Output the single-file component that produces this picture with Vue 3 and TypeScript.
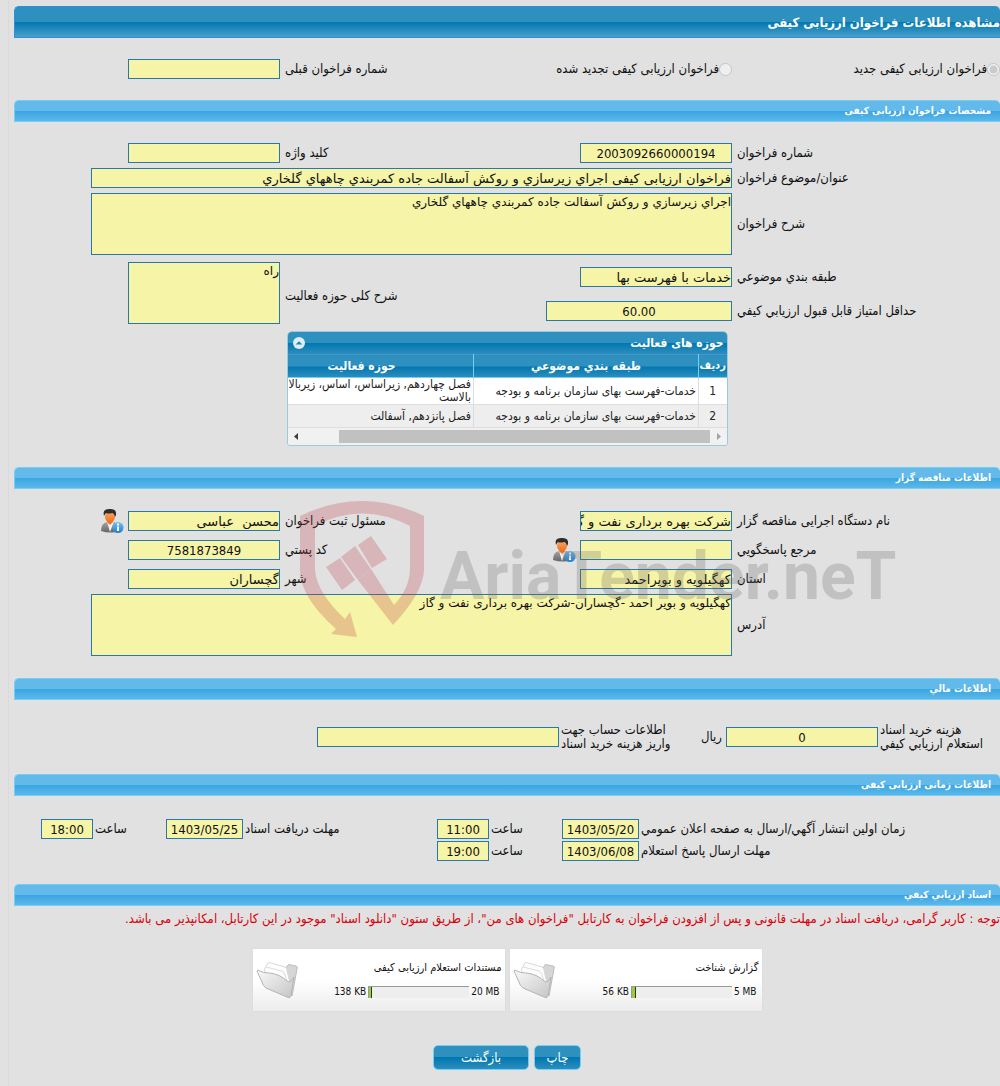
<script setup lang="ts">
import { ref } from 'vue'

interface ActivityRow {
  id: number
  category: string
  field: string[]
}

interface DocumentCard {
  title: string
  limit: string
  used: string
  percent: number
}

const kind = ref<'new' | 'renewed'>('new')

const description = ref('اجراي زيرسازي و روکش آسفالت جاده کمربندي چاههاي گلخاري')
const scope = ref('راه')
const address = ref('کهگیلویه و بویر احمد -گچساران-شرکت بهره برداری نفت و گاز')

const activities: ActivityRow[] = [
  {
    id: 1,
    category: 'خدمات-فهرست بهای سازمان برنامه و بودجه',
    field: ['فصل چهاردهم, زیراساس، اساس، زیربالا', 'بالاست'],
  },
  {
    id: 2,
    category: 'خدمات-فهرست بهای سازمان برنامه و بودجه',
    field: ['فصل پانزدهم, آسفالت'],
  },
]

const documents: DocumentCard[] = [
  { title: 'گزارش شناخت', limit: '5 MB', used: '56 KB', percent: 4 },
  { title: 'مستندات استعلام ارزیابی کیفی', limit: '20 MB', used: '138 KB', percent: 3 },
]
</script>

<template>
  <main class="page" dir="rtl">
    <h1 class="title">مشاهده اطلاعات فراخوان ارزیابی کیفی</h1>

    <section class="grid kind">
      <label class="radio"><input v-model="kind" type="radio" value="new" disabled />فراخوان ارزیابی کیفی جدید</label>
      <label class="radio"><input v-model="kind" type="radio" value="renewed" disabled />فراخوان ارزیابی کیفی تجدید شده</label>
      <label class="lbl" for="prev">شماره فراخوان قبلی</label>
      <input id="prev" class="box std" readonly />
    </section>

    <h2 class="bar">مشخصات فراخوان ارزیابی کیفی</h2>
    <section class="specs">
      <div class="grid">
        <label class="lbl" for="num">شماره فراخوان</label>
        <input id="num" class="box std num" readonly value="2003092660000194" />
        <label class="lbl" for="key">کلید واژه</label>
        <input id="key" class="box std" readonly />
        <label class="lbl c1" for="subject">عنوان/موضوع فراخوان</label>
        <input id="subject" class="box wide" readonly value="فراخوان ارزیابی کیفی اجراي زيرسازي و روکش آسفالت جاده کمربندي چاههاي گلخاري" />
        <label class="lbl c1" for="desc">شرح فراخوان</label>
        <textarea id="desc" v-model="description" class="box area wide" readonly></textarea>
      </div>
      <div class="grid classes">
        <label class="lbl r1 c1" for="cls">طبقه بندي موضوعي</label>
        <input id="cls" class="box std r1 c2" readonly value="خدمات با فهرست بها" />
        <label class="lbl tall c3" for="scope">شرح کلی حوزه فعالیت</label>
        <textarea id="scope" v-model="scope" class="box area std tall c4 top" readonly></textarea>
        <label class="lbl r2 c1" for="score">حداقل امتیاز قابل قبول ارزیابي کیفي</label>
        <input id="score" class="box num r2 c2" readonly value="60.00" />
      </div>

      <div class="panel">
        <div class="panel-head">
          <span>حوزه های فعالیت</span>
          <button class="fold" type="button" aria-label="بستن">
            <svg width="12" height="12" viewBox="0 0 12 12"><circle cx="6" cy="6" r="6" fill="#dceefa" /><path d="M2.6 7.4 6 4.2l3.4 3.2z" fill="#2b80b0" /></svg>
          </button>
        </div>
        <div class="clip">
          <table>
            <colgroup><col class="k1" /><col class="k2" /><col class="k3" /></colgroup>
            <thead>
              <tr><th>ردیف</th><th>طبقه بندي موضوعي</th><th>حوزه فعالیت</th></tr>
            </thead>
            <tbody>
              <tr v-for="row in activities" :key="row.id">
                <td class="mid">{{ row.id }}</td>
                <td>{{ row.category }}</td>
                <td><div v-for="line in row.field" :key="line">{{ line }}</div></td>
              </tr>
            </tbody>
          </table>
        </div>
        <div class="scroll">
          <svg width="17" height="17" viewBox="0 0 17 17"><path d="M7 5v7l4-3.500z" fill="#a3a3a3" /></svg>
          <div class="thumb"></div>
          <svg width="17" height="17" viewBox="0 0 17 17"><path d="M10 5v7L6 8.500z" fill="#404040" /></svg>
        </div>
      </div>
    </section>

    <h2 class="bar">اطلاعات مناقصه گزار</h2>
    <section class="owner">
      <div class="grid loose">
        <label class="lbl" for="org">نام دستگاه اجرایی مناقصه گزار</label>
        <input id="org" class="box std" readonly value="شرکت بهره برداری نفت و گاز گچساران" />
        <label class="lbl" for="person">مسئول ثبت فراخوان</label>
        <div class="with-icon">
          <input id="person" class="box std" readonly value="محسن  عباسی" />
          <svg class="person" viewBox="0 0 24 26"><use href="#person-info" /></svg>
        </div>
        <label class="lbl c1" for="contact">مرجع پاسخگویي</label>
        <div class="with-icon one">
          <input id="contact" class="box std" readonly />
          <svg class="person" viewBox="0 0 24 26"><use href="#person-info" /></svg>
        </div>
        <label class="lbl" for="zip">کد پستي</label>
        <input id="zip" class="box std num" readonly value="7581873849" />
        <label class="lbl c1" for="state">استان</label>
        <input id="state" class="box std" readonly value="کهگیلویه و بویراحمد" />
        <label class="lbl" for="city">شهر</label>
        <input id="city" class="box std" readonly value="گچساران" />
      </div>
      <div class="grid address">
        <label class="lbl" for="addr">آدرس</label>
        <textarea id="addr" v-model="address" class="box area wide" readonly></textarea>
      </div>
      <div class="mark" dir="ltr" aria-hidden="true">
        <svg width="130" height="140" viewBox="0 0 130 140">
          <g fill="#be3746">
            <path d="M0 16Q62-14 124 16V70Q123 93 93 125L58 80 71 69 94 105Q110 88 110 68V26Q62 1 15 26V70Q17 93 45 119L50 112 57 137 31 134 36 129Q0 97 0 70Z" />
            <path d="m26 67 14-9 15 22-13 10zM41 57l14-11 16 23-13 11zM58 45l13-9 16 23-15 9z" />
          </g>
        </svg>
        <span class="name">AriaTender.neT</span>
      </div>
    </section>

    <h2 class="bar">اطلاعات مالي</h2>
    <section class="fees">
      <label class="lbl" for="cost">هزینه خرید اسناد<br />استعلام ارزیابي کیفي</label>
      <input id="cost" class="box num" readonly value="0" />
      <div class="split">
        <span>ریال</span>
        <label class="lbl" for="account">اطلاعات حساب جهت<br />واریز هزینه خرید اسناد</label>
      </div>
      <input id="account" class="box" readonly />
    </section>

    <h2 class="bar">اطلاعات زمانی ارزیابی کیفی</h2>
    <section class="times">
      <label class="lbl" for="d1">زمان اولین انتشار آگهي/ارسال به صفحه اعلان عمومي</label>
      <input id="d1" class="box num" readonly value="1403/05/20" />
      <label class="lbl" for="h1">ساعت</label>
      <input id="h1" class="box num" readonly value="11:00" />
      <label class="lbl" for="d2">مهلت دریافت اسناد</label>
      <input id="d2" class="box num" readonly value="1403/05/25" />
      <label class="lbl" for="h2">ساعت</label>
      <input id="h2" class="box num" readonly value="18:00" />
      <label class="lbl c1" for="d3">مهلت ارسال پاسخ استعلام</label>
      <input id="d3" class="box num" readonly value="1403/06/08" />
      <label class="lbl" for="h3">ساعت</label>
      <input id="h3" class="box num" readonly value="19:00" />
    </section>

    <h2 class="bar">اسناد ارزیابي کیفي</h2>
    <p class="note">توجه : کاربر گرامی، دریافت اسناد در مهلت قانونی و پس از افزودن فراخوان به کارتابل "فراخوان های من"، از طریق ستون "دانلود اسناد" موجود در این کارتابل، امکانپذیر می باشد.</p>
    <section class="cards">
      <article v-for="doc in documents" :key="doc.title" class="card">
        <div class="info">
          <h3>{{ doc.title }}</h3>
          <div class="usage">
            <span dir="ltr">{{ doc.limit }}</span>
            <div class="meter" dir="ltr"><i :style="{ width: doc.percent + '%' }"></i></div>
            <span dir="ltr">{{ doc.used }}</span>
          </div>
        </div>
        <svg class="folder" viewBox="0 0 42 38"><use href="#folder" /></svg>
      </article>
    </section>

    <footer class="actions">
      <button type="button" class="btn">چاپ</button>
      <button type="button" class="btn big">بازگشت</button>
    </footer>

    <svg class="defs" aria-hidden="true">
      <defs>
        <linearGradient id="suit" x2="0" y2="1"><stop offset="0" stop-color="#aaa" /><stop offset="1" stop-color="#666" /></linearGradient>
        <linearGradient id="blue" x2="0" y2="1"><stop offset="0" stop-color="#7cc0f0" /><stop offset="1" stop-color="#1c7fd0" /></linearGradient>
        <linearGradient id="skin" x2="0" y2="1"><stop offset="0" stop-color="#ffb066" /><stop offset="1" stop-color="#ee6d20" /></linearGradient>
        <linearGradient id="flap" x2="1" y2="1"><stop offset="0" stop-color="#fafafa" /><stop offset="1" stop-color="#c4c4c4" /></linearGradient>
        <symbol id="person-info" viewBox="0 0 24 26">
          <path d="M1 23Q1 15 7 14l3-1 4 1q6 2 6 9-9 3-19 0z" fill="url(#suit)" />
          <path d="M7 13.500 10 24l4-10.500z" fill="#f4f4f4" />
          <path d="M7 11h6v3l-3 3-3-3z" fill="#e8782c" />
          <ellipse cx="10" cy="8.500" rx="5" ry="6" fill="url(#skin)" />
          <path d="M4 8Q2 1 9 1q8-1 7 6l-1 2q-1-4-3-4-3 1-6 0-1 1-2 3z" fill="#2d2d2d" />
          <circle cx="18" cy="19.500" r="5.500" fill="url(#blue)" />
          <path d="M17 18.500h2V23h-2zM17 15.500h2v2h-2z" fill="#fff" />
        </symbol>
        <symbol id="folder" viewBox="0 0 42 38">
          <path d="M20 6 29 8l3-4q1-1 3 0l5 1q2 0 1 3l-5 27-10-8z" fill="#d6d6d6" stroke="#bdbdbd" />
          <path d="m8 9 4-7q1-1 3 0l14 4q2 1 2 3l4 18-20-6z" fill="#fdfdfd" stroke="#d8d8d8" />
          <path d="m10 6 16 4q2 1 3 4l3 9" fill="none" stroke="#dcdcdc" />
          <path d="M1 10q0-2 3 0 3 2 9 2 11 1 18 8 2 2 4 0l3-4-3 19q-1 3-4 1L10 27q-3-2-4-6z" fill="url(#flap)" stroke="#b4b4b4" />
        </symbol>
      </defs>
    </svg>
  </main>
</template>

<style>
body {
  margin: 0;
  background: #e1e1e1;
}
</style>

<style scoped>
.page {
  box-sizing: border-box;
  margin-left: 8px;
  padding: 6px 0 16px 5px;
  border-left: 1px solid #dadada;
  overflow: hidden;
  font: 13px/16px "DejaVu Sans Condensed", "DejaVu Sans", sans-serif;
  color: #111;
}
.page * {
  box-sizing: border-box;
}
.title {
  margin: 0;
  height: 32px;
  border: 1px solid #2e8fe0;
  border-right: 0;
  border-radius: 5px 5px 0 0;
  background: linear-gradient(#2e90bf 0 50%, #0077b0 50%, #4a9fc8);
  color: #fff;
  font-size: 13px;
  line-height: 31px;
}
.bar {
  margin: 0;
  height: 22px;
  padding-right: 9px;
  border: 1px solid #74cff5;
  border-right: 0;
  border-radius: 5px 5px 0 0;
  background: linear-gradient(#62b9ea 0 50%, #38a5e1 50%, #5cb8ea);
  color: #fff;
  font-size: 10px;
  line-height: 20px;
}
.grid {
  display: grid;
  grid-template-columns: 268fr 186px 266fr 152px 114fr;
  gap: 5px 0;
  align-items: center;
}
.kind {
  padding: 21px 0;
}
.radio {
  display: flex;
  align-items: center;
  white-space: nowrap;
}
.radio input {
  margin: 0;
  width: 13px;
  height: 13px;
}
.lbl {
  padding-left: 5px;
  text-align: left;
  white-space: nowrap;
}
.c1 {
  grid-column: 1;
}
.c2 {
  grid-column: 2;
}
.c3 {
  grid-column: 3;
}
.c4 {
  grid-column: 4;
}
.r1 {
  grid-row: 1;
}
.r2 {
  grid-row: 2;
}
.box {
  display: block;
  width: 100%;
  height: 20px;
  margin: 0;
  padding: 0;
  border: 1px solid #2878aa;
  border-radius: 0;
  outline: 0;
  background: #f6f4a6;
  color: #111;
  font: 13px/18px "DejaVu Sans", sans-serif;
}
.std {
  width: 152px;
}
.num {
  direction: ltr;
  text-align: center;
  font-family: "DejaVu Sans Condensed", "DejaVu Sans", sans-serif;
}
.wide {
  grid-column: 2 / 6;
  width: auto;
  margin-left: 77px;
}
.area {
  height: 62px;
  resize: none;
  overflow: hidden;
  font-size: 12px;
  line-height: 16px;
}
.specs {
  padding: 21px 0;
}
.classes {
  grid-template-rows: 30px 38px;
  row-gap: 0;
  margin-top: 7px;
}
.tall {
  grid-row: 1 / 3;
}
.top {
  align-self: start;
}
.panel {
  width: 441px;
  margin: 1px auto 0;
  border: 1px solid #9cc8e2;
  border-radius: 5px 5px 3px 3px;
  overflow: hidden;
  font-size: 12px;
}
.panel-head {
  display: flex;
  justify-content: space-between;
  align-items: center;
  height: 22px;
  padding: 0 3px 0 5px;
  background: linear-gradient(#2e90bf 0 50%, #0077b0 50%, #2e8dbd);
  color: #fff;
  font-weight: bold;
}
.fold {
  padding: 0;
  border: 0;
  background: none;
  line-height: 0;
}
.clip {
  overflow: hidden;
}
table {
  width: 477px;
  table-layout: fixed;
  border-collapse: collapse;
}
.k1 { width: 28px; }
.k2 { width: 225px; }
.k3 { width: 224px; }
th {
  height: 23px;
  padding: 0;
  border-left: 1px solid #74cff5;
  border-top: 1px solid #4297cb;
  border-bottom: 1px solid #74cff5;
  background: linear-gradient(#2e90bf 0 50%, #0077b0 50%, #2e8dbd);
  color: #fff;
}
th:first-child {
  font-size: 11px;
}
td {
  height: 23px;
  padding: 0 2px;
  border-left: 1px solid #ddd;
  border-bottom: 1px solid #ddd;
  line-height: 13px;
  white-space: nowrap;
  color: #222;
}
tbody tr {
  background: #fff;
}
tbody tr:nth-child(2) {
  background: #eee;
}
.mid {
  text-align: center;
}
.scroll {
  display: flex;
  height: 17px;
  background: #f1f1f1;
}
.thumb {
  flex: 1;
  margin: 2px 0 2px 34px;
  background: #c1c1c1;
}
.owner {
  position: relative;
  padding: 21px 0 22px;
}
.loose {
  grid-auto-rows: 22px;
  row-gap: 7px;
}
.with-icon {
  display: flex;
  align-items: center;
  gap: 4px;
  grid-column: 4 / 6;
}
.with-icon.one {
  grid-column: 2;
}
.person {
  width: 24px;
  height: 26px;
}
.address {
  margin-top: 4px;
}
.mark {
  position: absolute;
  top: 11px;
  left: 286px;
  display: flex;
  align-items: center;
  gap: 10px;
  opacity: 0.25;
  pointer-events: none;
  color: #666;
  font: bold 66px/70px Roboto, sans-serif;
}
.name {
  padding-top: 14px;
}
.fees {
  display: grid;
  grid-template-columns: 122fr 152px 167fr 242px 303fr;
  align-items: center;
  padding: 23px 0;
  line-height: 14px;
}
.fees .lbl {
  padding-left: 2px;
}
.split {
  display: flex;
  justify-content: space-between;
  align-items: center;
  padding-right: 4px;
}
.times {
  display: grid;
  grid-template-columns: 361fr 77px 73fr 52px 194fr 77px 73fr 52px 27fr;
  row-gap: 2px;
  align-items: center;
  padding: 23px 0;
}
.times .lbl {
  padding-left: 2px;
}
.note {
  margin: 5px 0 0;
  line-height: 16px;
  white-space: nowrap;
  color: #d8000c;
}
.cards {
  display: flex;
  justify-content: center;
  gap: 3px;
  margin-top: 21px;
}
.card {
  display: flex;
  justify-content: space-between;
  align-items: center;
  width: 254px;
  height: 64px;
  padding: 0 3px;
  border: 1px solid #ddd;
  background: linear-gradient(#fff 50%, #ececec);
  font-size: 10px;
}
.card h3 {
  margin: 0 0 10px;
  font-size: 11px;
  line-height: 14px;
  font-weight: normal;
}
.usage {
  display: flex;
  align-items: center;
  gap: 2px;
  padding-right: 2px;
  line-height: 14px;
}
.meter {
  width: 101px;
  height: 12px;
  border-top: 1px solid #999;
  border-left: 1px solid #999;
  background: #eee;
}
.meter i {
  display: block;
  height: 100%;
  border-right: 1px solid #333;
  background: #9acd32;
}
.folder {
  width: 42px;
  height: 38px;
}
.actions {
  display: flex;
  justify-content: center;
  gap: 5px;
  margin-top: 33px;
}
.btn {
  height: 25px;
  width: 47px;
  padding: 0;
  border: 1px solid #74cff5;
  border-radius: 5px;
  background: linear-gradient(#2e90bf 0 50%, #0077b0 50%, #2e8dbd);
  color: #fff;
  font: 13px/20px "DejaVu Sans Condensed", "DejaVu Sans", sans-serif;
}
.big {
  width: 96px;
}
.defs {
  position: absolute;
  width: 0;
  height: 0;
}
</style>
